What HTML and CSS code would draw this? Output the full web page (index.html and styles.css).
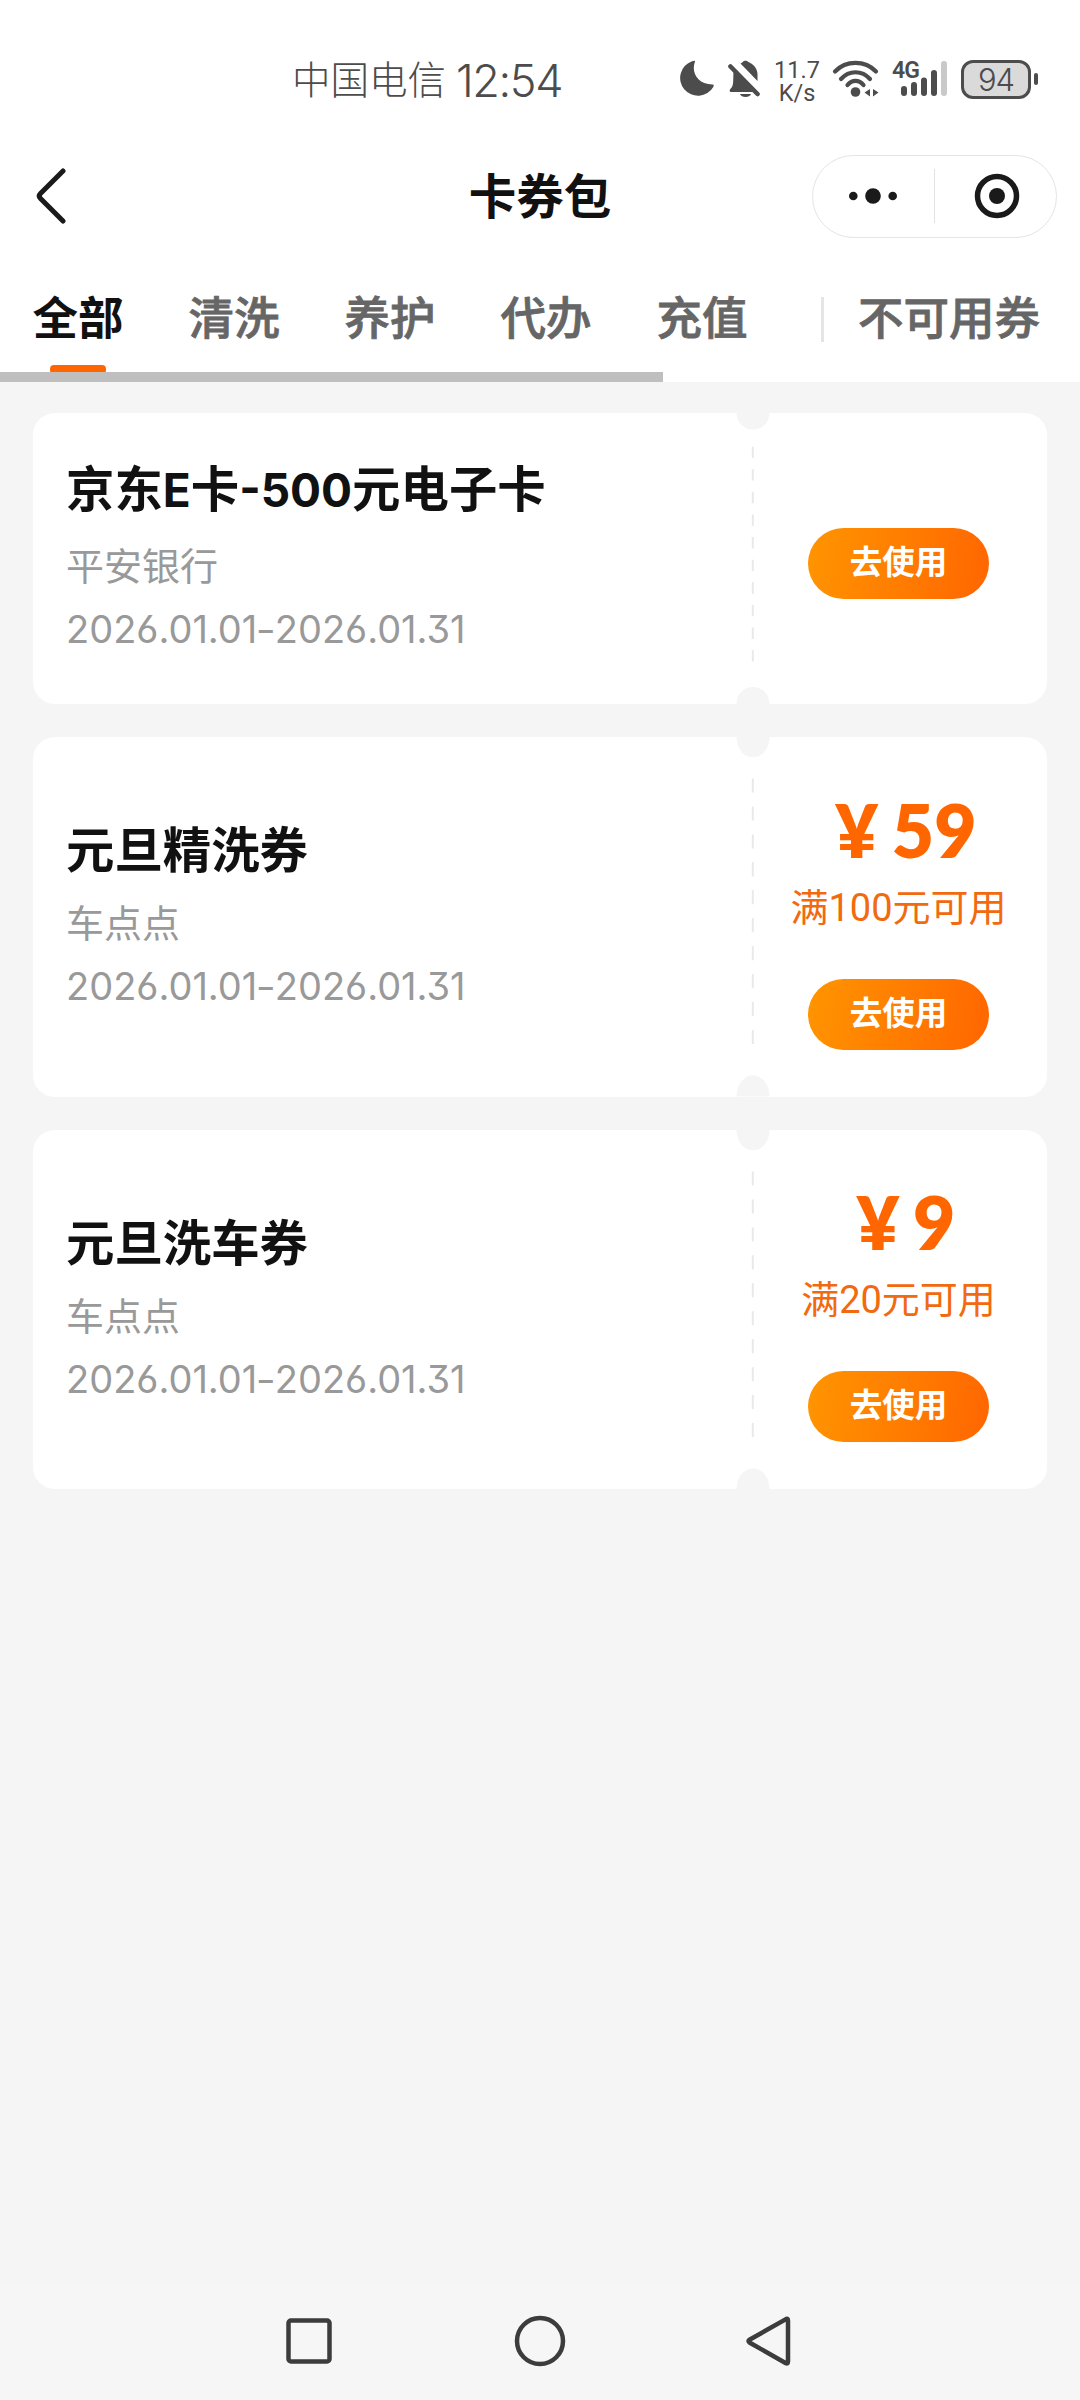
FILE: index.html
```html
<!DOCTYPE html>
<html lang="zh-CN">
<head>
<meta charset="utf-8">
<title>卡券包</title>
<link rel="stylesheet" href="styles.css">
</head>
<body>
<div class="screen">
  <div class="status-bar">
    <div class="carrier">中国电信</div>
    <div class="clock">12:54</div>
    <div class="status-icons">
      <svg class="icon-moon" width="36" height="40" viewBox="0 0 36 40"><path d="M16 2.5C12 13 18 25 33.500 25.500C35 25.500 34.800 27 34.300 28A17.800 17.800 0 1 1 13 2.200C15 1.500 16.500 1.500 16 2.500Z" fill="#4c4c4c"/></svg>
      <svg class="icon-bell" width="34" height="40" viewBox="0 0 34 40"><g fill="#4c4c4c"><path d="M12.500 4.500C14 3.800 14.500 3.300 15 2.700C16 1.500 19 1.500 20 2.700C25 5 29.500 9 29.500 15.500V22Z"/><path d="M5.500 12L25 33H3C1.500 33 1.300 31 2.300 30C4.500 28 5 26 5.200 22Z"/><path d="M12 35H23C22 39 13 39 12 35Z"/></g><path d="M2.500 7.500L29.500 35" stroke="#4c4c4c" stroke-width="4.600" stroke-linecap="round"/></svg>
      <div class="net-speed"><span>11.7</span><span>K/s</span></div>
      <svg class="icon-wifi" width="48" height="40" viewBox="0 0 48 40"><g fill="none" stroke="#4c4c4c" stroke-width="4.200" stroke-linecap="round"><path d="M3 12.500C14 1 33 1 44 12.500"/><path d="M9 20C17 11 30 11 38 20"/><path d="M15.500 26C20 20.500 27 20.500 31.500 26"/></g><circle cx="23.500" cy="33" r="4.800" fill="#4c4c4c"/><path d="M38 30V37.500L32.500 33.500ZM41 30V37.500L46.500 33.500Z" fill="#4c4c4c"/></svg>
      <div class="signal">
        <span class="signal-label">4G</span>
        <svg width="56" height="40" viewBox="0 0 56 40"><g stroke="#4c4c4c" stroke-width="6" stroke-linecap="round"><path d="M12 30V34M22 26V34M32 21.500V34M42 14V34"/><path d="M52 5V34" stroke="#c9c9c9"/></g></svg>
      </div>
      <div class="battery"><div class="battery-body">94</div><div class="battery-nub"></div></div>
    </div>
  </div>

  <header class="title-bar">
    <svg class="back" width="32" height="58" viewBox="0 0 32 58"><path d="M28 4L5.500 26.500Q3 29 5.500 31.500L28 54" fill="none" stroke="#1a1a1a" stroke-width="5" stroke-linecap="round"/></svg>
    <h1 class="page-title">卡券包</h1>
    <div class="capsule">
      <svg width="48" height="16" viewBox="0 0 48 16"><g fill="#1a1a1a"><circle cx="4.300" cy="8" r="4.300"/><circle cx="24" cy="8" r="7.800"/><circle cx="43.700" cy="8" r="4.300"/></g></svg>
      <div class="capsule-line"></div>
      <svg width="46" height="46" viewBox="0 0 46 46"><circle cx="23" cy="23" r="19.500" fill="none" stroke="#1a1a1a" stroke-width="5.500"/><circle cx="23" cy="23" r="8" fill="#1a1a1a"/></svg>
    </div>
  </header>

  <nav class="tabs">
    <div class="tab-list">
      <div class="tab active">全部</div>
      <div class="tab">清洗</div>
      <div class="tab">养护</div>
      <div class="tab">代办</div>
      <div class="tab">充值</div>
    </div>
    <div class="tab-divider"></div>
    <div class="tab">不可用券</div>
    <div class="scroll-thumb"></div>
  </nav>

  <main class="coupons">
    <article class="coupon short">
      <svg class="perforation" viewBox="0 0 34 359" preserveAspectRatio="none"><path d="M0.500 0C1 27 33 27 33.500 0ZM0.500 359C1 331 33 331 33.500 359Z" fill="#f5f5f5"/><path d="M16.800 41.500V318" stroke="#e9e9e9" stroke-width="2" stroke-dasharray="14 13.900"/></svg>
      <div class="info">
        <h2 class="name">京东<b>E</b>卡<b>-500</b>元电子卡</h2>
        <p class="source">平安银行</p>
        <p class="date">2026.01.01<i>-</i>2026.01.31</p>
      </div>
      <div class="action">
        <button class="use">去使用</button>
      </div>
    </article>
    <article class="coupon">
      <svg class="perforation" viewBox="0 0 34 359" preserveAspectRatio="none"><path d="M0.500 0C1 27 33 27 33.500 0ZM0.500 359C1 331 33 331 33.500 359Z" fill="#f5f5f5"/><path d="M16.800 41.500V318" stroke="#e9e9e9" stroke-width="2" stroke-dasharray="14 13.900"/></svg>
      <div class="info">
        <h2 class="name">元旦精洗券</h2>
        <p class="source">车点点</p>
        <p class="date">2026.01.01<i>-</i>2026.01.31</p>
      </div>
      <div class="action">
        <div class="price"><span class="yen">¥</span>59</div>
        <div class="limit">满<b>100</b>元可用</div>
        <button class="use">去使用</button>
      </div>
    </article>
    <article class="coupon">
      <svg class="perforation" viewBox="0 0 34 359" preserveAspectRatio="none"><path d="M0.500 0C1 27 33 27 33.500 0ZM0.500 359C1 331 33 331 33.500 359Z" fill="#f5f5f5"/><path d="M16.800 41.500V318" stroke="#e9e9e9" stroke-width="2" stroke-dasharray="14 13.900"/></svg>
      <div class="info">
        <h2 class="name">元旦洗车券</h2>
        <p class="source">车点点</p>
        <p class="date">2026.01.01<i>-</i>2026.01.31</p>
      </div>
      <div class="action">
        <div class="price"><span class="yen">¥</span>9</div>
        <div class="limit">满<b>20</b>元可用</div>
        <button class="use">去使用</button>
      </div>
    </article>
  </main>

  <footer class="nav-bar">
    <svg width="52" height="52" viewBox="0 0 52 52"><rect x="5.500" y="5.500" width="41" height="41" rx="2.500"/></svg>
    <svg width="52" height="52" viewBox="0 0 52 52"><circle cx="26" cy="26" r="23"/></svg>
    <svg width="52" height="52" viewBox="0 0 52 52"><path d="M40.500 4.500Q43 2.500 43 5.500V46.500Q43 49.500 40.500 48L4.500 27.500Q2.500 26 4.500 24.700Z"/></svg>
  </footer>
</div>
</body>
</html>
```

FILE: styles.css
```css
* { box-sizing: border-box; margin: 0; padding: 0; }

body {
  font-family: "Noto Sans CJK SC", sans-serif;
  background: #f5f5f5;
}

svg { display: block; flex: none; }

.screen {
  width: 1080px;
  height: 2400px;
  display: flex;
  flex-direction: column;
  overflow: hidden;
}

/* status bar */
.status-bar {
  display: flex;
  height: 132px;
  padding: 59px 38px 0 292px;
  background: #fff;
  color: #4c4c4c;
}
.carrier { font-size: 38.500px; font-weight: 300; line-height: 36px; width: 164px; white-space: nowrap; }
.clock { font-family: Inter, sans-serif; font-size: 45px; font-weight: 300; line-height: 43px; letter-spacing: -1.400px; width: 223px; }
.status-icons { display: flex; height: 40px; flex: 1; }
.icon-bell { margin-left: 13px; }
.net-speed {
  display: flex;
  flex-direction: column;
  align-items: center;
  width: 44px;
  margin-left: 13px;
  font: 23.500px/22.500px Roboto, sans-serif;
}
.icon-wifi { margin-left: 13px; }
.signal { position: relative; margin-left: 12px; }
.signal-label {
  position: absolute;
  left: 0;
  top: 1px;
  font: 600 23px/22px Roboto, sans-serif;
  letter-spacing: -1px;
}
.battery { display: flex; align-items: center; gap: 3px; margin-left: 13px; }
.battery-body {
  width: 70px;
  height: 39px;
  border: 3px solid #4c4c4c;
  border-radius: 12px;
  background: #dadada;
  font: 300 31px/33px Inter, sans-serif;
  text-align: center;
  letter-spacing: -1px;
}
.battery-nub { width: 4px; height: 12px; border-radius: 2px; background: #4c4c4c; }

/* title bar */
.title-bar {
  display: grid;
  grid-template-columns: 1fr auto 1fr;
  align-items: center;
  height: 128px;
  padding: 0 23px 0 35px;
  background: #fff;
}
.page-title { font-size: 47.500px; font-weight: 700; line-height: 60px; color: #111; margin: -5px 12px 0 0; }
.capsule {
  justify-self: end;
  display: flex;
  align-items: center;
  width: 245px;
  height: 83px;
  padding: 0 36px;
  border: 1px solid #e4e4e4;
  border-radius: 42px;
  justify-content: space-between;
}
.capsule-line { width: 1px; height: 54px; background: #e2e2e2; margin-right: 3px; }

/* tabs */
.tabs {
  position: relative;
  display: flex;
  height: 122px;
  padding-left: 32.500px;
  background: #fff;
}
.tab { position: relative; font-size: 45.500px; font-weight: 500; line-height: 60px; padding-top: 25px; color: #666; white-space: nowrap; -webkit-text-stroke: 0.800px; }
.tab.active { color: #111; font-weight: 700; -webkit-text-stroke: 0; }
.tab.active::after {
  content: "";
  position: absolute;
  left: 17px;
  top: 105px;
  width: 56px;
  height: 9px;
  border-radius: 4px;
  background: #f60;
}
.tab-list { display: flex; gap: 65px; width: 788.500px; }
.tab-divider { width: 3px; height: 45px; margin: 37px 34px 0 0; background: #e5e5e5; }
.scroll-thumb { position: absolute; left: 0; bottom: 0; width: 663px; height: 10px; background: #bfbfbf; }

/* coupons */
.coupons { flex: 1; display: flex; flex-direction: column; gap: 33px; padding: 31px 33px 0; }
.coupon {
  position: relative;
  display: flex;
  align-items: center;
  height: 359.500px;
  padding-left: 33px;
  border-radius: 22px;
  background: #fff;
}
.coupon.short { height: 291px; }
.perforation { position: absolute; left: 702.500px; top: 0; width: 34px; height: 100%; }
.info { width: 701px; padding-bottom: 7px; }
.short .info { padding-bottom: 9px; }
.name { font-size: 48.400px; font-weight: 700; line-height: 76px; color: #111; margin-bottom: 5px; }
.name b { font-family: Inter, sans-serif; font-size: 46px; font-weight: 700; }
.source, .date { font-size: 38px; line-height: 62px; color: #999; }
.date { margin-top: 3px; font-family: Inter, sans-serif; font-feature-settings: "ss01"; }
.date i { display: inline-block; font-style: normal; transform: scaleX(1.150); }
.action { flex: 1; display: flex; flex-direction: column; align-items: center; padding: 2px 17px 0 0; }
.short .action { padding-top: 10px; }
.price { font: 800 73px/88px Lato, sans-serif; color: #f60; padding-left: 15px; margin-bottom: 3px; }
.yen { margin-right: 14px; }
.limit { font-size: 38px; line-height: 56px; color: #f26a10; margin-bottom: 43px; white-space: nowrap; }
.limit b { font: 400 38px/56px Roboto, sans-serif; }
.use {
  width: 181px;
  height: 71px;
  border: 0;
  border-radius: 36px;
  background: linear-gradient(100deg, #ff9500, #f60);
  color: #fff;
  font: 700 32.500px/60px "Noto Sans CJK SC", sans-serif;
  padding-bottom: 7px;
}

/* navigation bar */
.nav-bar {
  display: flex;
  justify-content: center;
  gap: 179px;
  height: 117px;
  padding-top: 32px;
  background: #f6f6f6;
}
.nav-bar svg { fill: none; stroke: #3c3c3c; stroke-width: 4.500; }
```
